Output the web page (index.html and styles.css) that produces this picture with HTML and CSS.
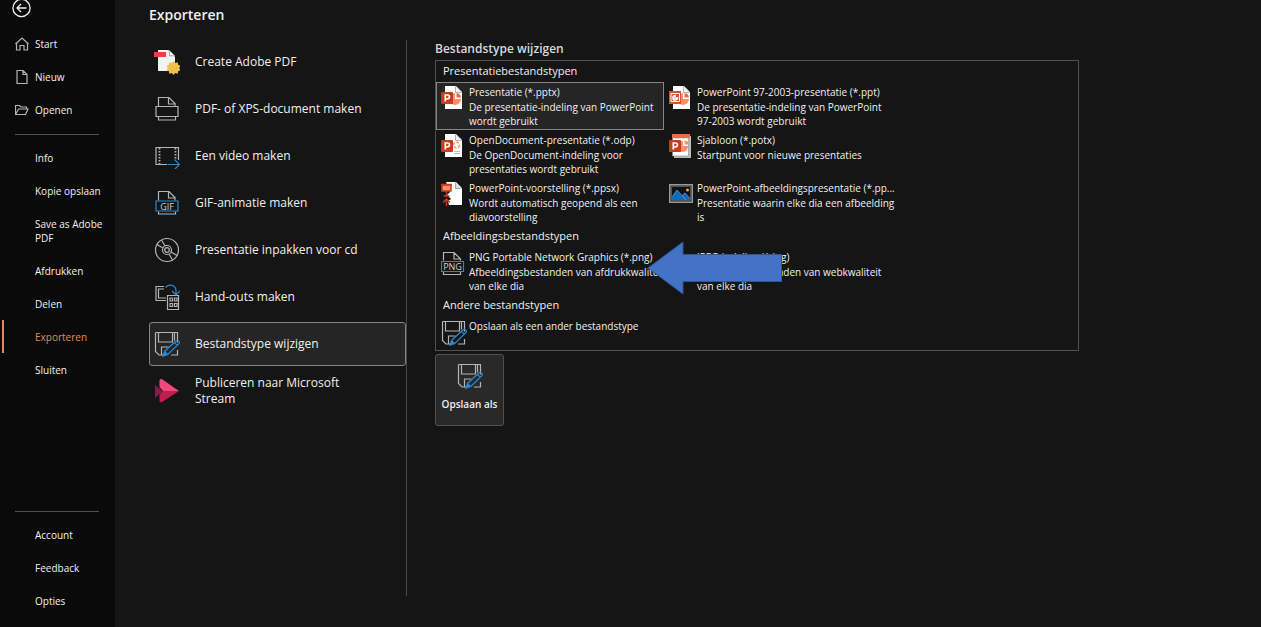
FILE: index.html
```html
<!DOCTYPE html>
<html lang="nl">
<head>
<meta charset="utf-8">
<title>Exporteren</title>
<link rel="stylesheet" href="styles.css">
</head>
<body>
<svg class="defs" aria-hidden="true">
  <symbol id="save" viewBox="0 0 26 26">
    <path class="line" d="M1.500 1.500h22v10M1.500 1.500v19l3.500 3.500h4M4.500 1.500v9.500h14v-9.500M7.500 24v-8h7M20.500 1.500v8M17 24h6.500v-5"/>
    <path class="blue" d="M9 25.200l1.700-5L22.200 9.800c1.800-1.200 4 1 2.700 2.800L13.800 23.500zM20.500 11.500l2.700 2.700M10.500 20.500l3 3"/>
    <path class="bluefill" d="M9 25.200l1.500-4.700 3 3z"/>
  </symbol>
  <symbol id="ppt" viewBox="0 0 22 24">
    <path fill="#fff" d="M4 0h11l6 6v17H4z"/>
    <path fill="#c9c9c9" d="M14.500 0.500v6h6z"/>
    <path fill="#f2f2f2" stroke="#999" stroke-width=".7" d="M14.500.500v6h6"/>
  </symbol>
  <symbol id="pbox" viewBox="0 0 12 12">
    <rect width="12" height="12" rx="1" fill="#c43e1c"/>
    <path fill="none" stroke="#fff" stroke-width="1.700" d="M4.300 9.500V3h2.200a1.900 1.900 0 0 1 0 3.900H4.300"/>
  </symbol>
</svg>
<div class="app">
  <nav class="sidebar">
    <button class="back" aria-label="Terug"><svg viewBox="0 0 20 20" width="20" height="20"><circle class="white" cx="10.500" cy="10" r="8.600"/><path class="white" d="M15.500 10H6M10 6l-4 4 4 4"/></svg></button>
    <a class="nav" href="#"><svg viewBox="0 0 14 14" width="14" height="14"><path class="line" d="M1.500 13V6L7 1l5.500 5v7h-3.500V8.500H5V13zM.5 7l1-1M13.500 7l-1-1"/></svg>Start</a>
    <a class="nav" href="#"><svg viewBox="0 0 14 14" width="14" height="14"><path class="line" d="M2 .500h6l4 4v9H2zM8 .500v4h4"/></svg>Nieuw</a>
    <a class="nav" href="#"><svg viewBox="0 0 14 14" width="14" height="14"><path class="line" d="M.5 11.500v-9h4l1.500 1.500h5.500v2M.5 11.500l3-5.500H13l-2.500 5.500z"/></svg>Openen</a>
    <hr>
    <a class="nav" href="#">Info</a>
    <a class="nav" href="#">Kopie opslaan</a>
    <a class="nav" href="#">Save as Adobe PDF</a>
    <a class="nav" href="#">Afdrukken</a>
    <a class="nav" href="#">Delen</a>
    <a class="nav current" href="#" aria-current="page">Exporteren</a>
    <a class="nav" href="#">Sluiten</a>
    <hr class="low">
    <a class="nav" href="#">Account</a>
    <a class="nav" href="#">Feedback</a>
    <a class="nav" href="#">Opties</a>
  </nav>
  <main>
    <h1>Exporteren</h1>
    <div class="columns">
      <section class="actions">
        <button class="action"><svg viewBox="0 0 26 26" width="26" height="26"><path fill="#f4f4f4" d="M4 1h11l6 6v15H4z"/><path fill="#fff" stroke="#888" stroke-width=".8" d="M14.500 1c1.500 1.500 1 4 1 6 2-.5 4-.5 5.500.500"/><path fill="#ee3e45" d="M0 3h12v5H0z"/><path fill="#f0c04a" d="M19.500 12l1.700 2 2.500-.8.400 2.600 2.400 1-1.300 2.200 1.300 2.300-2.400.9-.4 2.600-2.500-.9-1.700 2-1.700-2-2.500.900-.4-2.600-2.400-.9 1.300-2.300-1.300-2.200 2.400-1 .4-2.600 2.500.8z"/></svg>Create Adobe PDF</button>
        <button class="action"><svg viewBox="0 0 26 26" width="26" height="26"><path class="line" d="M4.500 10.500V1.500H15l6 6v3M14.500 1.500v6.500H21M2 10.500h22v10H2zM4.500 20.500v3.500h17v-3.500"/></svg>PDF- of XPS-document maken</button>
        <button class="action"><svg viewBox="0 0 26 26" width="26" height="26"><path class="line" d="M13 21.500H2v-17h22.500V17"/><path fill="none" stroke="#b4b4b4" stroke-width="1.800" stroke-dasharray="1.500 1.500" d="M5.500 5v16M21.500 5v11"/><path class="blue" d="M13.500 21.500h12M20.500 16.500l5 5-5 5"/></svg>Een video maken</button>
        <button class="action"><svg viewBox="0 0 26 26" width="26" height="26"><path class="line" d="M4.500 10.500V1.500H15l6 6v3M14.500 1.500v6.500H21M4.500 21.500v2.500h17v-2.500"/><path class="blue" d="M2 11h22v10H2z"/><text class="tag" x="13" y="19.500">GIF</text></svg>GIF-animatie maken</button>
        <button class="action"><svg viewBox="0 0 26 26" width="26" height="26"><circle class="line" cx="13" cy="13" r="11.500"/><circle class="line" cx="13" cy="13" r="4.500"/><circle class="line" cx="13" cy="13" r="2.300"/><path class="line" d="M11 9L7.500 3M9 11L3 7.500M15 17l3.500 6M17 15l6 3.500"/></svg>Presentatie inpakken voor cd</button>
        <button class="action"><svg viewBox="0 0 26 26" width="26" height="26"><path class="line" d="M10 2.500H2v14h10M10 5H4.500v9H12M13.500 11.500H24.500v14h-11zM16 14h2.500v3H16zM20.500 14H23v3h-2.500zM16 19.500h2.500v3H16zM20.500 19.500H23v3h-2.500z"/><path class="blue" d="M11.500 3.500c4-4 10-2.500 10.500 3v4M18 7l4 4 4-4"/></svg>Hand-outs maken</button>
        <button class="action chosen"><svg width="26" height="26"><use href="#save"/></svg>Bestandstype wijzigen</button>
        <button class="action"><svg viewBox="0 0 26 26" width="26" height="26"><path fill="#851c45" d="M1 7l8 6.500L1 20z"/><path fill="#f0497e" d="M5.500 2q1-1.500 3-.5L25 13H9L5.500 9z"/><path fill="#c21d4f" d="M25 13L8 24q-2 1-2.500-1v-6L9 13z"/></svg>Publiceren naar Microsoft Stream</button>
      </section>
      <section class="detail">
        <h2>Bestandstype wijzigen</h2>
        <div class="panel">
          <h3>Presentatiebestandstypen</h3>
          <div class="types">
            <button class="type picked"><svg width="22" height="24"><use href="#ppt"/><path fill="#ff8f6b" d="M14 7v6h6a6 6 0 1 1-6-6z"/><path fill="#ed6c47" d="M15.500 7a5 5 0 0 1 4.500 4.500h-4.500z"/><use href="#pbox" y="6" width="12" height="12"/></svg><span class="text"><span class="name">Presentatie (*.pptx)</span><span class="about">De presentatie-indeling van PowerPoint wordt gebruikt</span></span></button>
            <button class="type"><svg width="22" height="24"><use href="#ppt"/><path fill="#ff8f6b" d="M14 7v6h6a6 6 0 1 1-6-6z"/><path fill="#ed6c47" d="M15.500 7a5 5 0 0 1 4.500 4.500h-4.500z"/><path fill="#d35230" d="M0 5h12v13H0z"/><path fill="none" stroke="#fff" stroke-width="1" d="M2 7.500h8.500v8H2z"/><path fill="none" stroke="#fff" stroke-width="1.500" d="M6 9.500a2.300 2.300 0 1 0 2.500 2.500H6z"/></svg><span class="text"><span class="name">PowerPoint 97-2003-presentatie (*.ppt)</span><span class="about">De presentatie-indeling van PowerPoint 97-2003 wordt gebruikt</span></span></button>
            <button class="type"><svg width="22" height="24"><use href="#ppt"/><circle cx="15.500" cy="11" r="3" fill="none" stroke="#ff8f6b" stroke-width="1.500" stroke-dasharray="3 1.500"/><path stroke="#bbb" d="M13 17.500h6M13 19.500h6"/><use href="#pbox" y="6" width="12" height="12"/></svg><span class="text"><span class="name">OpenDocument-presentatie (*.odp)</span><span class="about">De OpenDocument-indeling voor presentaties wordt gebruikt</span></span></button>
            <button class="type"><svg width="22" height="24"><path fill="#bdbdbd" d="M5 2h17v22H5z"/><path fill="#fff" stroke="#888" stroke-width=".6" d="M3.500 4h16v18h-16z"/><path fill="#ed6c47" d="M3 0h18v4H3z"/><path fill="#ff8f6b" d="M14 7v5h5a5.500 5.500 0 1 1-5-5zM15.500 6.500a4 4 0 0 1 4 4h-4z"/><use href="#pbox" y="6" width="12" height="12"/></svg><span class="text"><span class="name">Sjabloon (*.potx)</span><span class="about">Startpunt voor nieuwe presentaties</span></span></button>
            <button class="type"><svg width="22" height="24"><path fill="#fff" d="M5 0h10l6 6v17H8l-1-4 3-2-4-4 3-3z"/><path fill="#ddd" stroke="#888" stroke-width=".7" d="M14.500.500v6h6"/><path fill="#ff8f6b" stroke="#c43e1c" stroke-width="1.500" d="M1 3h9v6H1z"/><path fill="none" stroke="#c43e1c" stroke-width="1.500" d="M0 2.500h11M5.500 9v5M2.500 14h6M5.500 24v-6M2 20.500l3.500-3.500L9 20.500"/></svg><span class="text"><span class="name">PowerPoint-voorstelling (*.ppsx)</span><span class="about">Wordt automatisch geopend als een diavoorstelling</span></span></button>
            <button class="type"><svg width="24" height="24"><path fill="#222" stroke="#9a9a9a" stroke-width="1.500" d="M.75 2.750h22.500v17.500H.75z"/><path fill="#111" stroke="#555" d="M2.500 4.500h19v14h-19z"/><path fill="#0f6cbd" d="M3 15l5-7 5 6 3-3 5.500 6v1H3z"/><path fill="none" stroke="#62b0e8" stroke-width=".7" d="M3 15l5-7 9 10M13 13.500l3-2.500 5 5.500"/><circle cx="18.500" cy="8" r="1.500" fill="#f5a742"/></svg><span class="text"><span class="name">PowerPoint-afbeeldingspresentatie (*.pp...</span><span class="about">Presentatie waarin elke dia een afbeelding is</span></span></button>
          </div>
          <h3>Afbeeldingsbestandstypen</h3>
          <div class="types">
            <button class="type"><svg viewBox="0 0 24 26" width="24" height="26"><path class="line" d="M2.500 9.500V1.500H13l6.500 6.500v1.500M13 1.500V8h6.500M2.500 20.500v3h17v-3"/><path class="blue" d="M.5 10.500h22v10H.5z"/><text class="tag" x="11.500" y="19">PNG</text></svg><span class="text"><span class="name">PNG Portable Network Graphics (*.png)</span><span class="about">Afbeeldingsbestanden van afdrukkwaliteit van elke dia</span></span></button>
            <button class="type"><span></span><span class="text"><span class="name">JPEG-indeling (*.jpg)</span><span class="about">Afbeeldingsbestanden van webkwaliteit van elke dia</span></span></button>
          </div>
          <h3>Andere bestandstypen</h3>
          <div class="types">
            <button class="type short"><svg width="26" height="26"><use href="#save"/></svg><span class="text"><span class="name">Opslaan als een ander bestandstype</span></span></button>
          </div>
          <svg class="arrow" viewBox="0 0 136 54" width="136" height="54"><path fill="#4472c4" stroke="#2f5597" d="M1 27L36 1v12.500h98.500v27H36V53z"/></svg>
        </div>
        <button class="saveas"><svg width="26" height="26"><use href="#save"/></svg>Opslaan als</button>
      </section>
    </div>
  </main>
</div>
</body>
</html>
```
FILE: styles.css
```css
* { box-sizing: border-box; }
body {
  margin: 0;
  background: #151515;
  color: #f0f0f0;
  font-family: "Open Sans", "Noto Sans", sans-serif;
  font-size: 10px;
  line-height: 14px;
}
button {
  margin: 0;
  padding: 0;
  border: 1px solid transparent;
  background: none;
  color: inherit;
  font: inherit;
  text-align: left;
}
svg { flex: none; }
.defs { position: absolute; width: 0; height: 0; }
.line { fill: none; stroke: #b4b4b4; stroke-width: 1.2; }
.white { fill: none; stroke: #f0f0f0; stroke-width: 1.3; }
.blue { fill: none; stroke: #2b88cf; stroke-width: 1.2; }
.bluefill { fill: #2b88cf; }
.tag { fill: #d0d0d0; font-size: 9px; text-anchor: middle; }

.app { display: flex; min-height: 100vh; }
.sidebar {
  display: flex;
  flex-direction: column;
  flex: none;
  width: 115px;
  padding-bottom: 10px;
  background: #0a0a0a;
}
.back { width: 20px; height: 20px; margin: -2px 0 9px 11px; border: 0; }
.back svg { display: block; }
.nav {
  display: flex;
  padding: 10px 12px 9px 35px;
  color: inherit;
  text-decoration: none;
}
.nav svg { margin: 0 6px 0 -20px; }
.nav.current { padding-left: 31px; margin-left: 2px; border-left: 2px solid #e0885a; color: #e0885a; }
.sidebar hr {
  width: 84px;
  height: 1px;
  margin: 8px 0 6px 15px;
  border: 0;
  background: #505050;
}
.sidebar hr.low { margin-top: auto; }

main { display: flex; flex: 1; flex-direction: column; padding: 5px 0 31px 34px; }
h1, h2, h3 { margin: 0; font-weight: 600; }
h1 { font-size: 14px; line-height: 20px; }
.columns { display: flex; flex: 1; padding-top: 15px; }
.actions {
  display: flex;
  flex: none;
  flex-direction: column;
  gap: 3px;
  width: 258px;
  border-right: 1px solid #484848;
}
.action {
  display: flex;
  align-items: center;
  gap: 15px;
  height: 44px;
  padding: 0 40px 0 4px;
  border-radius: 3px;
  font-size: 12px;
  line-height: 16px;
}
.chosen { border-color: #858585; background: #252525; }

.detail { flex: 1; padding: 1px 182px 0 28px; }
h2 { padding-bottom: 3px; color: #d8d8d8; font-size: 12px; line-height: 16px; }
.panel { position: relative; border: 1px solid #505050; }
h3 { padding: 0 7px 1px; font-size: 11px; font-weight: 400; line-height: 20px; }
.types { display: grid; grid-template-columns: 228px 228px; }
.type {
  display: grid;
  grid-template-columns: 28px 200px;
  align-content: start;
  height: 48px;
  padding: 2px 0 0 4px;
}
.picked { border-color: #858585; background: #252525; }
.short { height: 34px; }
.name, .about { display: block; }
.name { white-space: nowrap; }
.about { margin-top: 1px; }
.type > svg { margin-top: 1px; }
.arrow { position: absolute; left: 211px; top: 180px; }
.saveas {
  display: flex;
  flex-direction: column;
  align-items: center;
  gap: 8px;
  width: 69px;
  height: 72px;
  margin-top: 3px;
  padding-top: 8px;
  border-color: #505050;
  border-radius: 3px;
  background: #292929;
  font-weight: 600;
}
```
